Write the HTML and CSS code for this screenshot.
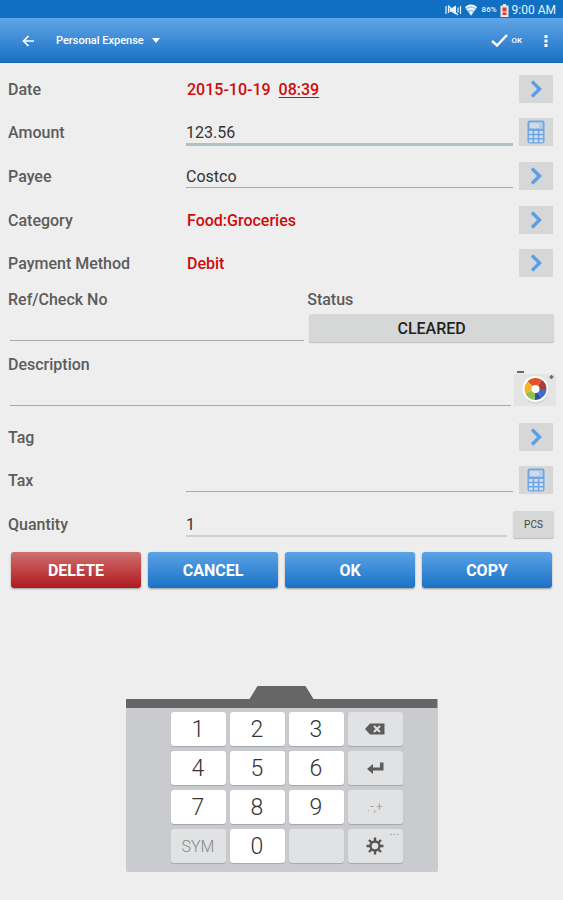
FILE: index.html
```html
<!DOCTYPE html>
<html lang="en">
  <head>
    <meta charset="UTF-8" />
    <meta name="viewport" content="width=device-width, initial-scale=1.0" />
    <title>Personal Expense</title>
    <link rel="stylesheet" href="styles.css">
  </head>
  <body>
    <!-- shared icons -->
    <svg class="sprite" aria-hidden="true">
      <symbol id="chevron" viewBox="0 0 12 18">
        <path d="M2 1.500 9.500 9 2 16.500" fill="none" stroke="#5a9fe6" stroke-width="3.400" />
      </symbol>
      <symbol id="calc" viewBox="0 0 18 24">
        <rect x="0.500" y="0.500" width="17" height="23" rx="2" fill="#6fa6e3" />
        <rect x="2.500" y="2.500" width="13" height="6" fill="#d3dbe2" />
        <path d="M12 2.500h3.500v6H12z" fill="#b4cfec" />
        <g fill="#d0def0">
          <path d="M2 11h3.600v2.800H2zM7.200 11h3.600v2.800H7.200zM12.400 11H16v2.800h-3.600z" />
          <path d="M2 15.200h3.600V18H2zM7.200 15.200h3.600V18H7.200zM12.400 15.200H16V18h-3.600z" />
          <path d="M2 19.400h3.600v2.800H2zM7.200 19.400h3.600v2.800H7.200zM12.400 19.400H16v2.800h-3.600z" />
        </g>
      </symbol>
    </svg>

    <div class="status-bar">
      <svg width="17" height="12" viewBox="0 0 17 12" fill="none" stroke="#e6f0fa">
        <path d="M1 2v8M15.500 2v8M3.500 3v6M13 3.500v5" stroke-width="1.200" />
        <path d="M5 4.500h2L10.500 2v8L7 7.500H5z" fill="#e6f0fa" />
        <path d="M3 1.500l10 9.500" stroke-width="1.300" />
      </svg>
      <svg class="wifi" width="12" height="12" viewBox="0 0 12 12">
        <path d="M0 3.500Q6-1.500 12 3.500L6 12z" fill="#a9cdee" />
        <path d="M0.500 3.500Q6-1 11.500 3.500M2.500 6Q6 3.500 9.500 6" fill="none" stroke="#fff" stroke-width="1.500" />
        <path d="M4.500 8Q6 7 7.500 8L6 11z" fill="#fff" />
      </svg>
      <span class="battery-text">86%</span>
      <svg width="9" height="13" viewBox="0 0 9 13">
        <path d="M3 0h3v1.500h2.500V13h-8V1.500H3z" fill="#f3e4e0" />
        <path d="M2.500 3.500h4v4h-4zM2.500 8.500h4v2.500h-4z" fill="#d4402f" />
      </svg>
      <span class="clock">9:00 AM</span>
    </div>

    <header class="app-bar">
      <button class="bar-btn" aria-label="Back">
        <svg width="13" height="12" viewBox="0 0 13 12" fill="none" stroke="#fff" stroke-width="1.700">
          <path d="M12 6H1.500M6.500 1l-5 5 5 5" />
        </svg>
      </button>
      <button class="bar-btn account">
        Personal Expense
        <svg width="8" height="5" viewBox="0 0 8 5"><path d="M0 0h8L4 5z" fill="#fff" /></svg>
      </button>
      <button class="bar-btn confirm">
        <svg width="17" height="13" viewBox="0 0 17 13" fill="none" stroke="#fff" stroke-width="2.400">
          <path d="M1 7l5 4.500L16 1" />
        </svg>
        OK
      </button>
      <button class="bar-btn" aria-label="More">
        <svg width="4" height="12" viewBox="0 0 4 12" fill="#fff">
          <path d="M0.500 0h3v3h-3zM0.500 4.500h3v3h-3zM0.500 9h3v3h-3z" />
        </svg>
      </button>
    </header>

    <form class="expense">
      <div class="row">
        <span class="label">Date</span>
        <span class="value">2015-10-19 <a href="#" class="time">08:39</a></span>
        <button type="button" class="pick" aria-label="Pick date"><svg width="12" height="18"><use href="#chevron" /></svg></button>
      </div>
      <div class="row row-input">
        <label class="label" for="amount">Amount</label>
        <input type="text" id="amount" class="active" value="123.56" />
        <button type="button" class="pick" aria-label="Calculator"><svg width="18" height="24"><use href="#calc" /></svg></button>
      </div>
      <div class="row row-input">
        <label class="label" for="payee">Payee</label>
        <input type="text" id="payee" value="Costco" />
        <button type="button" class="pick" aria-label="Pick payee"><svg width="12" height="18"><use href="#chevron" /></svg></button>
      </div>
      <div class="row">
        <span class="label">Category</span>
        <span class="value">Food:Groceries</span>
        <button type="button" class="pick" aria-label="Pick category"><svg width="12" height="18"><use href="#chevron" /></svg></button>
      </div>
      <div class="row">
        <span class="label">Payment Method</span>
        <span class="value">Debit</span>
        <button type="button" class="pick" aria-label="Pick payment method"><svg width="12" height="18"><use href="#chevron" /></svg></button>
      </div>

      <div class="split">
        <div class="ref">
          <label for="ref">Ref/Check No</label>
          <input type="text" id="ref" />
        </div>
        <div class="state">
          <label for="status">Status</label>
          <button type="button" id="status" class="cleared">CLEARED</button>
        </div>
      </div>

      <div class="description">
        <div class="description-field">
          <label for="description">Description</label>
          <input type="text" id="description" />
        </div>
        <button type="button" class="photo" aria-label="Add picture">
          <svg width="42" height="36" viewBox="0 0 42 36">
            <path d="M0 4h42v32H0z" fill="#e4e4e4" />
            <path d="M3 1h7v2H3z" fill="#666" />
            <path d="M37.500 5v4M35.500 7h4" stroke="#666" stroke-width="1.600" />
            <circle cx="22" cy="20.500" r="13" fill="#d2d2d2" />
            <circle cx="21.500" cy="19" r="13" fill="#fff" />
            <path d="M21.500 19l-8-7.500A11 11 0 0 1 28 10z" fill="#e5532d" />
            <path d="M21.500 19l6.500-9a11 11 0 0 1 4.500 9z" fill="#b03a3c" />
            <path d="M21.500 19h11a11 11 0 0 1-5 9z" fill="#3f6cc4" />
            <path d="M21.500 19l6 9a11 11 0 0 1-7 2z" fill="#3150a0" />
            <path d="M21.500 19l-1 11a11 11 0 0 1-9-6.500z" fill="#8cc152" />
            <path d="M21.500 19l-10 4.500a11 11 0 0 1 2-12z" fill="#f4b32c" />
            <circle cx="21.500" cy="19" r="4" fill="#fff" />
          </svg>
        </button>
      </div>

      <div class="row">
        <span class="label">Tag</span>
        <span class="value"></span>
        <button type="button" class="pick" aria-label="Pick tag"><svg width="12" height="18"><use href="#chevron" /></svg></button>
      </div>
      <div class="row row-input">
        <label class="label" for="tax">Tax</label>
        <input type="text" id="tax" />
        <button type="button" class="pick" aria-label="Calculator"><svg width="18" height="24"><use href="#calc" /></svg></button>
      </div>
      <div class="row row-input">
        <label class="label" for="quantity">Quantity</label>
        <input type="text" id="quantity" class="soft" value="1" />
        <button type="button" class="unit">PCS</button>
      </div>

      <div class="actions">
        <button type="button" class="delete">DELETE</button>
        <button type="button">CANCEL</button>
        <button type="button">OK</button>
        <button type="button">COPY</button>
      </div>
    </form>

    <div class="keyboard">
      <div class="handle"></div>
      <div class="keys">
        <button>1</button>
        <button>2</button>
        <button>3</button>
        <button class="fn" aria-label="Backspace">
          <svg width="20" height="12" viewBox="0 0 20 12">
            <path d="M0 6l5-5.500h14.500v11H5z" fill="#5c5c5c" />
            <path d="M9 3l6 6M15 3L9 9" stroke="#e0e2e4" stroke-width="2" />
          </svg>
        </button>
        <button>4</button>
        <button>5</button>
        <button>6</button>
        <button class="fn" aria-label="Enter">
          <svg width="17" height="12" viewBox="0 0 17 12">
            <path d="M0 7l6-5v3.500h7V0.500h3.500v8H6V12z" fill="#5c5c5c" />
          </svg>
        </button>
        <button>7</button>
        <button>8</button>
        <button>9</button>
        <button class="fn symbols">.-,+</button>
        <button class="fn sym">SYM</button>
        <button>0</button>
        <button class="fn" aria-label="Space"></button>
        <button class="fn" aria-label="Settings">
          <svg width="18" height="18" viewBox="0 0 18 18" fill="none" stroke="#555">
            <circle cx="9" cy="9" r="4.500" stroke-width="2.400" />
            <path d="M9 0.500v3.500M9 14v3.500M0.500 9H4M14 9h3.500M3 3l2.500 2.500M12.500 12.500L15 15M15 3l-2.500 2.500M5.500 12.500L3 15" stroke-width="2.400" />
          </svg>
          <span class="more">...</span>
        </button>
      </div>
    </div>
  </body>
</html>
```
FILE: styles.css
```css
* {
  box-sizing: border-box;
}
body {
  margin: 0;
  min-height: 100vh;
  display: flex;
  flex-direction: column;
  background: #eeeeee;
  font-family: Roboto, "Liberation Sans", sans-serif;
  font-size: 16px;
  line-height: 20px;
  color: #5c5c5c;
}
button,
input {
  font-family: inherit;
  border: none;
  padding: 0;
  margin: 0;
}
svg {
  display: block;
}
.sprite {
  position: absolute;
  width: 0;
  height: 0;
}

/* top bars */
.status-bar {
  height: 18px;
  padding: 2px 7px 0 0;
  display: flex;
  justify-content: flex-end;
  align-items: center;
  gap: 3px;
  background: #1170c2;
  color: #e6f0fa;
}
.wifi {
  margin-right: 2px;
}
.battery-text {
  font-size: 8px;
  font-weight: 500;
}
.clock {
  font-size: 12px;
}
.app-bar {
  height: 45px;
  padding: 1px 15px 0 22px;
  display: flex;
  align-items: center;
  background: linear-gradient(#60a5e6, #1a70c4);
  border-bottom: 1px solid #1266b8;
}
.bar-btn {
  display: flex;
  align-items: center;
  gap: 6px;
  background: none;
  color: #fff;
  font-weight: 500;
}
.account {
  margin-left: 21px;
  gap: 8px;
  font-size: 11px;
}
.confirm {
  margin-left: auto;
  margin-right: 22px;
  gap: 3px;
  font-size: 8px;
}

/* form */
.expense {
  padding: 4px 10px 0 8px;
}
.row {
  height: 43px;
  display: flex;
  align-items: center;
}
.row-input {
  height: 44px;
}
label,
.label,
.value {
  font-weight: 500;
}
.label {
  width: 178px;
  flex: none;
  padding-top: 2px;
}
.value {
  flex: 1;
  padding: 2px 0 0 1px;
  color: #cc0c0c;
}
.time {
  margin-left: 4px;
  color: inherit;
  text-underline-offset: 2px;
}
input {
  flex: 1;
  min-width: 0;
  height: 24px;
  padding-top: 2px;
  background: none;
  border-bottom: 1px solid #a9a9a9;
  font-size: 16px;
  color: #333;
}
input:focus {
  outline: none;
}
.active {
  height: 27px;
  padding-top: 4px;
  border-bottom: 3px solid #b1bfc6;
}
.soft {
  height: 26px;
  border-bottom: 2px solid #d0d0d0;
}
.pick {
  width: 34px;
  height: 28px;
  margin-left: 6px;
  display: flex;
  justify-content: center;
  align-items: center;
  background: #d6d8d8;
}
.unit {
  width: 41px;
  height: 27px;
  margin-left: 6px;
  margin-right: -1px;
  border-radius: 2px;
  background: #d6d8d8;
  box-shadow: 0 1px 1px #bbb;
  font-size: 10px;
  color: #444;
}
.split {
  display: flex;
  gap: 3px;
  padding-top: 6px;
  margin-right: -1px;
}
.ref,
.state {
  display: flex;
  flex-direction: column;
}
.ref {
  flex: 6;
}
.state {
  flex: 5;
}
.ref input,
.description-field input {
  flex: none;
  height: 31px;
  margin-left: 2px;
}
.cleared {
  height: 28px;
  margin: 4px 0 0 2px;
  border-radius: 2px;
  background: #d6d8d8;
  box-shadow: 0 1px 1px #bbb;
  font-size: 16px;
  font-weight: 500;
  color: #222;
}
.description {
  display: flex;
  align-items: flex-end;
  gap: 3px;
  margin: 13px -3px 9px 0;
}
.description-field {
  flex: 1;
  display: flex;
  flex-direction: column;
}
.photo {
  background: none;
}

.actions {
  display: flex;
  gap: 7px;
  margin: 6px 1px 0 3px;
}
.actions button {
  flex: 1;
  height: 36px;
  border-radius: 3px;
  background: linear-gradient(#5ba2e6, #1b72c6);
  box-shadow: 0 1px 2px #999;
  font-size: 16px;
  font-weight: 700;
  color: #fff;
}
.actions .delete {
  background: linear-gradient(#cf6f6f, #b01a1e);
}

/* number pad */
.keyboard {
  width: 312px;
  margin: auto auto 28px;
}
.handle {
  height: 22px;
  background: #666;
  clip-path: polygon(0 13px, 124px 13px, 132px 0, 180px 0, 188px 13px, 100% 13px, 100% 100%, 0 100%);
}
.keys {
  display: grid;
  grid-template-columns: repeat(4, 55px);
  grid-auto-rows: 34px;
  justify-content: center;
  gap: 5px 4px;
  padding: 4px 0 9px 10px;
  background: #c9cbcf;
  border-radius: 0 0 2px 2px;
}
.keys button {
  position: relative;
  display: flex;
  justify-content: center;
  align-items: center;
  border-radius: 3px;
  background: #fff;
  box-shadow: 0 1px 1px #a4a6aa;
  font-size: 23px;
  font-weight: 300;
  color: #333;
}
.keys .fn {
  background: #e0e2e4;
}
.keys .sym {
  font-size: 16px;
  color: #888;
}
.keys .symbols {
  font-size: 12px;
  color: #888;
}
.more {
  position: absolute;
  top: -6px;
  right: 3px;
  font-size: 14px;
  line-height: 14px;
  color: #888;
}
```
